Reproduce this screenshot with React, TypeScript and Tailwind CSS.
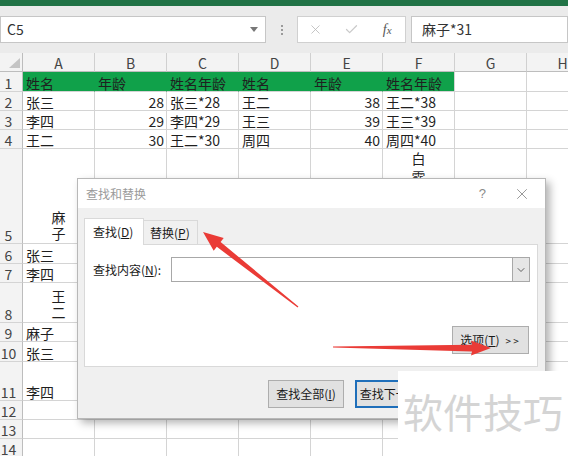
import { X, Check, ChevronDown } from "lucide-react";

type Val = string | number | { lines: string[]; top?: boolean } | null;

const rows: { n: number; green?: boolean; cells: Val[] }[] = [
  { n: 1, green: true, cells: ["姓名", "年龄", "姓名年龄", "姓名", "年龄", "姓名年龄"] },
  { n: 2, cells: ["张三", 28, "张三*28", "王二", 38, "王二*38"] },
  { n: 3, cells: ["李四", 29, "李四*29", "王三", 39, "王三*39"] },
  { n: 4, cells: ["王二", 30, "王二*30", "周四", 40, "周四*40"] },
  { n: 5, cells: [{ lines: ["麻", "子"] }, null, null, null, null, { lines: ["白", "露"], top: true }] },
  { n: 6, cells: ["张三"] },
  { n: 7, cells: ["李四"] },
  { n: 8, cells: [{ lines: ["王", "二"] }] },
  { n: 9, cells: ["麻子"] },
  { n: 10, cells: ["张三"] },
  { n: 11, cells: ["李四"] },
  { n: 12, cells: [] },
  { n: 13, cells: [] },
  { n: 14, cells: [] },
];

const cols = ["A", "B", "C", "D", "E", "F", "G", "H"];

function Cell({ v, green, last }: { v: Val; green: boolean; last: boolean }) {
  const bg = green
    ? `bg-[#10a14a] border-b-[#d4d4d4] ${last ? "border-r-[#d4d4d4]" : "border-r-[#10a14a]"}`
    : "bg-white border-[#d4d4d4]";
  const base = `flex min-w-0 overflow-hidden border-r border-b text-[14px] text-[#1f1f1f] leading-[16px] ${bg}`;
  if (v === null || v === undefined) return <div className={base} />;
  if (typeof v === "number")
    return <div className={`${base} items-end justify-end pr-[2px]`}>{v}</div>;
  if (typeof v === "string")
    return <div className={`${base} items-end whitespace-nowrap pl-[3px]`}>{v}</div>;
  if (v.top)
    return (
      <div className={`${base} flex-col items-center justify-start leading-[19px]`}>
        {v.lines.map((l) => (
          <span key={l}>{l}</span>
        ))}
      </div>
    );
  return (
    <div className={`${base} flex-col items-center justify-end pb-[2px] leading-[15px]`}>
      {v.lines.map((l) => (
        <span key={l}>{l}</span>
      ))}
    </div>
  );
}

function Btn({ children, blue }: { children: React.ReactNode; blue?: boolean }) {
  return (
    <div
      className={`h-[28px] flex items-center justify-center bg-[#e1e1e1] whitespace-nowrap ${
        blue ? "w-[84px] border-2 border-[#1f6fba]" : "w-[76px] border border-[#adadad]"
      }`}
    >
      {children}
    </div>
  );
}

export default function App() {
  return (
    <div className="relative w-[568px] h-[456px] overflow-hidden bg-white font-['Noto_Sans_CJK_SC','Noto_Sans',sans-serif]">
      <div className="h-[6px] bg-[#217346]" />

      {/* formula bar */}
      <div className="h-[47px] bg-[#ebebeb] flex items-start pt-[10px]">
        <div className="w-[266px] h-[27px] bg-white border border-[#c6c6c6] flex items-center pl-[6px] pr-[7px] text-[14px] text-[#333]">
          C5
          <svg className="ml-auto" width="8" height="5" viewBox="0 0 8 5">
            <polygon points="0,0 8,0 4,5" fill="#777" />
          </svg>
        </div>
        <div className="w-[31px] h-[27px] flex flex-col items-center justify-center gap-[2px]">
          <span className="w-[2px] h-[2px] bg-[#9a9a9a]" />
          <span className="w-[2px] h-[2px] bg-[#9a9a9a]" />
          <span className="w-[2px] h-[2px] bg-[#9a9a9a]" />
        </div>
        <div className="w-[109px] h-[27px] bg-white border border-[#d0d0d0] grid grid-cols-3 items-center justify-items-center">
          <X size={15} strokeWidth={1.3} className="text-[#b8b8b8]" />
          <Check size={15} strokeWidth={2} className="text-[#cacaca]" />
          <span className="font-['Liberation_Serif',serif] italic text-[14px] text-[#555]">
            f<span className="text-[11px]">x</span>
          </span>
        </div>
        <div className="ml-[5px] flex-1 h-[27px] bg-white border border-[#c6c6c6] flex items-center pl-[10px] text-[14px] text-[#333]">
          麻子*31
        </div>
      </div>

      {/* sheet grid */}
      <div className="grid grid-cols-[23px_repeat(8,72px)] grid-rows-[19px_20px_19px_19px_19px_95px_20px_19px_40px_19px_20px_39px_19px_19px_19px]">
        <div className="relative bg-[#f3f3f3] border-r border-b border-[#bdbdbd] flex items-end justify-end pr-[2px] pb-[3px]">
          <svg width="11" height="10" viewBox="0 0 11 10">
            <polygon points="11,0 11,10 0,10" fill="#c4c4c4" />
          </svg>
        </div>
        {cols.map((c) => (
          <div
            key={c}
            className="bg-[#f3f3f3] border-r border-r-[#d0d0d0] border-b border-b-[#bdbdbd] flex items-end justify-center text-[14px] leading-[16px] text-[#444]"
          >
            {c}
          </div>
        ))}
        {rows.map((r) => (
          <div key={r.n} className="contents">
            <div className="bg-[#f3f3f3] border-r border-r-[#bdbdbd] border-b border-b-[#d4d4d4] flex items-end justify-center pr-[5px] text-[14px] leading-[16px] text-[#444]">
              {r.n}
            </div>
            {cols.map((c, i) => (
              <Cell key={c} v={r.cells[i] ?? null} green={!!r.green && i < 6} last={i === 5} />
            ))}
          </div>
        ))}
      </div>

      {/* find & replace dialog */}
      <div className="absolute left-[77px] top-[178px] w-[469px] h-[241px] flex flex-col border border-[#b8b8b8] bg-[#f0f0f0] shadow-[4px_4px_8px_rgba(0,0,0,0.3)] text-[12px] text-[#1a1a1a]">
        <div className="h-[29px] shrink-0 bg-white flex items-center pl-[8px] pr-[14px]">
          <span className="text-[#9a9a9a]">查找和替换</span>
          <span className="ml-auto mr-[27px] text-[13px] text-[#8a8a8a] font-['Liberation_Sans',sans-serif]">?</span>
          <X size={18} strokeWidth={1} className="text-[#777]" />
        </div>
        <div className="pl-[6px] pt-[10px]">
          <div className="flex items-end h-[27px]">
            <div className="relative z-10 w-[60px] h-[27px] bg-white border border-b-0 border-[#d9d9d9] flex items-center pl-[8px]">
              查找(<span className="underline">D</span>)
            </div>
            <div className="w-[54px] h-[25px] bg-[#f0f0f0] border border-l-0 border-[#d9d9d9] flex items-center pl-[6px]">
              替换(<span className="underline">P</span>)
            </div>
          </div>
          <div className="-mt-px w-[454px] h-[123px] bg-white border border-[#d9d9d9] flex flex-col pt-[12px] pb-[12px] pl-[8px] pr-[7px]">
            <div className="flex items-center">
              <span className="w-[78px]">
                查找内容(<span className="underline">N</span>):
              </span>
              <div className="flex-1 h-[25px] border border-[#a8a8a8] flex justify-end">
                <div className="w-[17px] bg-[#e6e6e6] border-l border-[#a8a8a8] flex items-center justify-center">
                  <ChevronDown size={12} strokeWidth={1.5} className="text-[#333]" />
                </div>
              </div>
            </div>
            <div className="mt-auto self-end w-[77px] h-[28px] bg-[#e1e1e1] border border-[#adadad] flex items-center justify-center gap-[6px] mr-[1px]">
              <span>
                选项(<span className="underline">T</span>)
              </span>
              <span className="text-[10px] tracking-[2px]">&gt;&gt;</span>
            </div>
          </div>
        </div>
        <div className="flex gap-[11px] pl-[190px] mt-[13px]">
          <Btn>
            <span>
              查找全部(<span className="underline">I</span>)
            </span>
          </Btn>
          <Btn blue>
            <span>
              查找下一个(<span className="underline">F</span>)
            </span>
          </Btn>
        </div>
      </div>

      {/* red annotation arrows */}
      <svg className="absolute left-0 top-0 pointer-events-none" width="568" height="456" viewBox="0 0 568 456">
        <polygon
          points="298.4,306.5 220.6,242 223.7,238.1 203,232 213.7,250.7 216.8,246.8 297.6,307.5"
          fill="#ea3b36"
        />
        <polygon
          points="333,346.6 472,344.8 471,340.5 491,348 471,355.5 472,351.4 333,347.6"
          fill="#ea3b36"
        />
      </svg>

      {/* watermark */}
      <div className="absolute left-[398px] top-[371px] w-[170px] h-[85px] bg-white pl-[5px] pt-[20px] text-[40px] leading-none text-[#d4d4d4] whitespace-nowrap">
        软件技巧
      </div>
    </div>
  );
}
